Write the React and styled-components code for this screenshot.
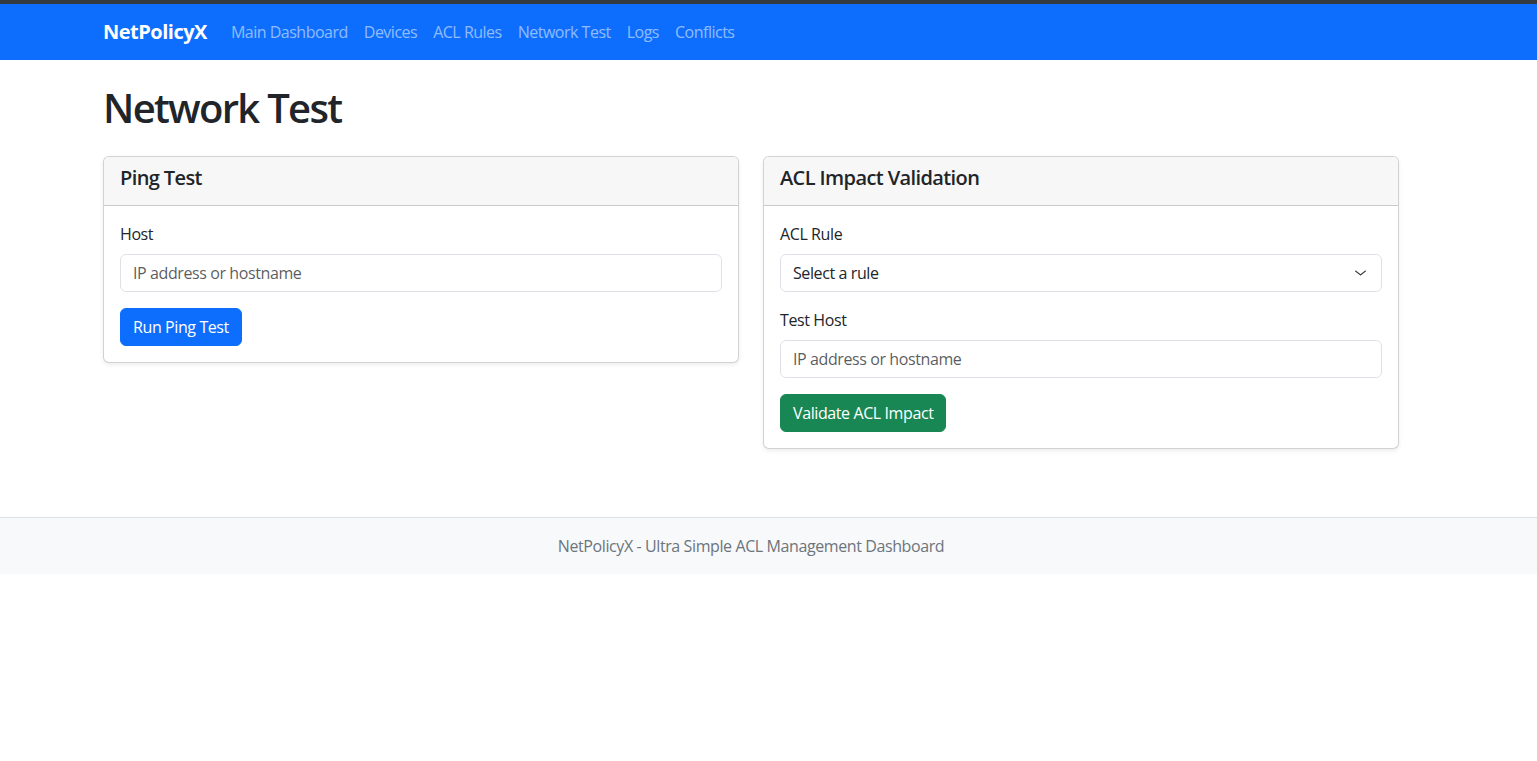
import * as React from 'react';
import styled, { createGlobalStyle } from 'styled-components';

const GlobalStyle = createGlobalStyle`
    * { box-sizing: border-box; }
    body {
        margin: 0;
        font-family: "Open Sans", "Noto Sans", "Liberation Sans", sans-serif;
        font-size: 16px;
        line-height: 1.5;
        color: #212529;
        background: #FFFFFF;
    }
`;

const Navbar = styled.nav`
    height: 60px;
    background: #0D6EFD;
    border-top: 4px solid #343A40;
    display: flex;
    align-items: center;
`;

const Container = styled.div`
    width: 1296px;
    margin-left: 103px;
    display: flex;
    flex-direction: ${p => p.column ? 'column' : 'row'};
    align-items: ${p => p.column ? 'stretch' : 'center'};
    justify-content: ${p => p.center ? 'center' : 'flex-start'};
`;

const Brand = styled.a`
    font-size: 20px;
    font-weight: 700;
    color: #FFFFFF;
    margin-right: 16px;
    letter-spacing: -0.5px;
    text-decoration: none;
    padding: 5px 0;
`;

const NavLink = styled.a`
    color: rgba(255, 255, 255, 0.55);
    padding: 8px 8px;
    font-size: 16px;
    letter-spacing: -0.5px;
    text-decoration: none;
`;

const Main = styled.main`
    padding-top: 24px;
`;

const Title = styled.h1`
    font-size: 40px;
    font-weight: 600;
    line-height: 1.2;
    letter-spacing: -1.7px;
    margin: 0 0 24px 0;
`;

const Row = styled.div`
    display: grid;
    grid-template-columns: 1fr 1fr;
    column-gap: 24px;
    align-items: start;
`;

const Card = styled.div`
    border: 1px solid rgba(0, 0, 0, 0.175);
    border-radius: 6px;
    box-shadow: 0 2px 4px rgba(0, 0, 0, 0.075);
    background: #FFFFFF;
    overflow: hidden;
`;

const CardHeader = styled.div`
    padding: 8px 16px;
    background: #F7F7F7;
    border-bottom: 1px solid rgba(0, 0, 0, 0.175);
`;

const CardTitle = styled.h5`
    font-size: 20px;
    font-weight: 600;
    line-height: 24px;
    letter-spacing: -0.6px;
    margin: 1px 0 7px 0;
`;

const CardBody = styled.div`
    padding: 16px;
`;

const Field = styled.div`
    margin-bottom: 16px;
`;

const Label = styled.label`
    display: block;
    margin-bottom: 8px;
    letter-spacing: -0.4px;
`;

const Input = styled.input`
    display: block;
    width: 100%;
    height: 38px;
    padding: 6px 12px;
    font: inherit;
    letter-spacing: -0.4px;
    color: #212529;
    border: 1px solid #DEE2E6;
    border-radius: 6px;
    outline: none;
    &::placeholder { color: rgba(33, 37, 41, 0.75); }
`;

const SelectBox = styled.div`
    height: 38px;
    padding: 6px 36px 6px 12px;
    border: 1px solid #DEE2E6;
    border-radius: 6px;
    display: flex;
    align-items: center;
    justify-content: space-between;
    letter-spacing: -0.4px;
    position: relative;
    svg {
        position: absolute;
        right: 14px;
        top: 13px;
    }
`;

const Button = styled.button`
    height: 38px;
    padding: 6px 12px;
    font: inherit;
    letter-spacing: -0.4px;
    color: #FFFFFF;
    background: ${p => p.success ? '#198754' : '#0D6EFD'};
    border: 1px solid ${p => p.success ? '#198754' : '#0D6EFD'};
    border-radius: 6px;
    cursor: pointer;
`;

const Footer = styled.footer`
    margin-top: 68px;
    padding: 16px 0;
    background: #F8F9FA;
    border-top: 1px solid #DEE2E6;
    color: #6C757D;
    letter-spacing: -0.4px;
`;

const Chevron = () => (
    <svg width="13" height="10" viewBox="0 0 16 16" preserveAspectRatio="none">
        <path d="m2 5 6 6 6-6" fill="none" stroke="#343A40" strokeWidth="1.6" strokeLinecap="round" strokeLinejoin="round" />
    </svg>
);

const links = ['Main Dashboard', 'Devices', 'ACL Rules', 'Network Test', 'Logs', 'Conflicts'];

export default function App() {
    return (
        <>
            <GlobalStyle />
            <Navbar>
                <Container>
                    <Brand href="#">NetPolicyX</Brand>
                    {links.map(l => <NavLink key={l} href="#">{l}</NavLink>)}
                </Container>
            </Navbar>

            <Main>
                <Container column>
                    <Title>Network Test</Title>
                    <Row>
                        <Card>
                            <CardHeader>
                                <CardTitle>Ping Test</CardTitle>
                            </CardHeader>
                            <CardBody>
                                <Field>
                                    <Label>Host</Label>
                                    <Input placeholder="IP address or hostname" />
                                </Field>
                                <Button>Run Ping Test</Button>
                            </CardBody>
                        </Card>

                        <Card>
                            <CardHeader>
                                <CardTitle>ACL Impact Validation</CardTitle>
                            </CardHeader>
                            <CardBody>
                                <Field>
                                    <Label>ACL Rule</Label>
                                    <SelectBox>
                                        <span>Select a rule</span>
                                        <Chevron />
                                    </SelectBox>
                                </Field>
                                <Field>
                                    <Label>Test Host</Label>
                                    <Input placeholder="IP address or hostname" />
                                </Field>
                                <Button success>Validate ACL Impact</Button>
                            </CardBody>
                        </Card>
                    </Row>
                </Container>
            </Main>

            <Footer>
                <Container center>
                    <span>NetPolicyX - Ultra Simple ACL Management Dashboard</span>
                </Container>
            </Footer>
        </>
    );
}
